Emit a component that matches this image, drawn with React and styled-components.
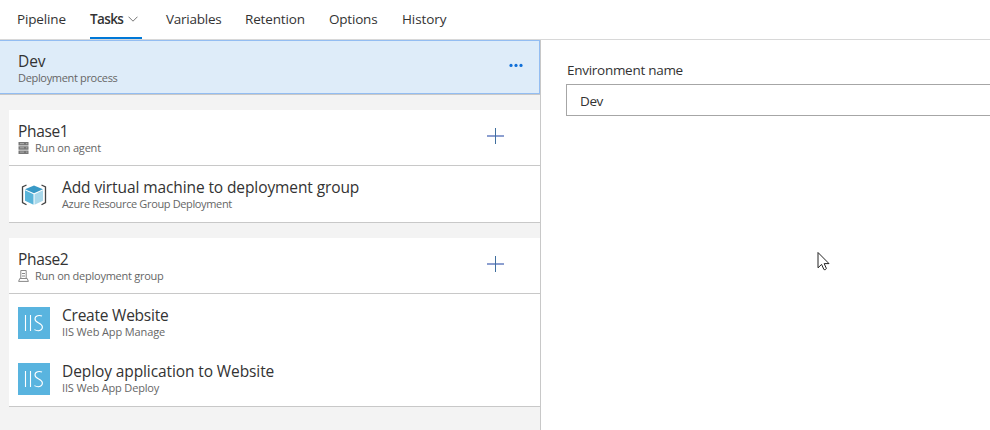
import React from "react";
import styled, { createGlobalStyle } from "styled-components";

const GlobalStyle = createGlobalStyle`
  * { box-sizing: border-box; }
  body { margin: 0; background: #fff; overflow: hidden; font-family: "Open Sans", "Noto Sans", sans-serif; color: #333; }
`;
const Page = styled.div`
  width: 990px; height: 430px; display: flex; flex-direction: column; overflow: hidden;
`;
const TabBar = styled.nav`
  height: 40px; flex: none; display: flex; gap: 24px; padding-left: 17px; border-bottom: 1px solid #d8d8d8;
`;
const Tab = styled.div`
  display: flex; align-items: center; gap: 5px; height: 39px; width: ${(p) => p.$width}px;
  font-size: 13.5px; line-height: 20px; white-space: nowrap; letter-spacing: ${(p) => p.$spacing || 0}px;
  font-weight: ${(p) => (p.$active ? 600 : 400)};
  border-bottom: 2px solid ${(p) => (p.$active ? "#0078d7" : "transparent")};
  svg { flex: none; }
`;
const Body = styled.main`
  flex: 1; min-height: 0; display: flex;
`;
const Sidebar = styled.section`
  width: 541px; flex: none; background: #f3f3f3; border-right: 1px solid #c8c8c8;
`;
const ProcessRow = styled.header`
  height: 54px; display: flex; align-items: center; justify-content: space-between;
  padding: 0 16px 0 18px; background: #deecf9; border: solid #93bdf2; border-width: 1px 1px 1px 0;
  box-shadow: 0 1px 0 #c8c8c8;
  > svg { margin-bottom: 4px; }
`;
const Group = styled.section`
  margin: ${(p) => p.$top}px 0 0 9px; background: #fff; border-bottom: 1px solid #c8c8c8;
`;
const PhaseRow = styled.header`
  height: 56px; display: flex; align-items: center; justify-content: space-between;
  padding: 0 36px 0 9px; border-bottom: 1px solid #c8c8c8;
  > svg { margin-bottom: 3px; }
`;
const TaskRow = styled.div`
  height: 56px; display: flex; align-items: center; gap: 12px; padding: 2px 0 0 9px;
`;
const Labels = styled.div`
  display: flex; flex-direction: column; padding-bottom: ${(p) => p.$lift || 0}px;
`;
const Title = styled.div`
  height: 21px; padding-top: 1px; font-size: 15.5px; line-height: 20px; white-space: nowrap;
  letter-spacing: ${(p) => p.$spacing ?? -0.1}px;
`;
const Subtitle = styled.div`
  display: flex; align-items: center; gap: 6px; height: 14px; padding-bottom: 1px; color: #666;
  font-size: 11px; line-height: 13px; white-space: nowrap; letter-spacing: ${(p) => p.$spacing ?? -0.33}px;
`;
const IisTile = styled.div`
  width: 32px; height: 32px; background: #59b4df; color: #fff; display: flex; align-items: center; justify-content: center;
`;
const Details = styled.section`
  flex: 1; padding: 20px 0 0 25px; position: relative;
`;
const FieldLabel = styled.label`
  display: block; height: 20px; padding-left: 1px; font-size: 13.5px; line-height: 20px; letter-spacing: -0.28px;
`;
const Field = styled.div`
  height: 32px; margin-top: 4px; padding: 1px 0 0 13px; border: 1px solid #a6a6a6; border-right: 0;
  font-size: 13.5px; line-height: 30px; letter-spacing: -0.4px;
`;
const Pointer = styled.svg`
  position: absolute; left: 276px; top: 211px;
`;

const Chevron = () => (
  <svg width="10" height="6" viewBox="0 0 10 6" fill="none" stroke="#777"><path d="M.5 .7 5 5.2 9.5 .7" /></svg>
);
const Dots = () => (
  <svg width="14" height="4" viewBox="0 0 14 4" fill="#106fd8"><circle cx="2" cy="2.4" r="1.6" /><circle cx="7" cy="2.4" r="1.6" /><circle cx="12" cy="2.4" r="1.6" /></svg>
);
const Plus = () => (
  <svg width="17" height="16" viewBox="0 0 17 16" fill="none"><path d="M0 8H17" stroke="#8c9fd0" strokeWidth="2" /><path d="M8.5 0V16" stroke="#3f6f9f" /></svg>
);
const ServerIcon = () => (
  <svg width="11" height="12" viewBox="0 0 11 12">
    <path d="M.5 0h10v3.5H.5zM.5 4.2h10v3.5H.5zM.5 8.4h10v3.5H.5z" fill="#777" />
    <path d="M2 1.6h4M8 1.6h1.4M2 5.8h4M8 5.8h1.4M2 10.1h4M8 10.1h1.4" stroke="#bbb" strokeWidth=".8" />
  </svg>
);
const MachineIcon = () => (
  <svg width="11" height="12" viewBox="0 0 11 12" fill="none" stroke="#888">
    <path d="M2.8 8.5v-8h5.4v8M4 3.5h3M4 6h3M1.8 8.5h7.4l1.2 2.9H.6z" />
  </svg>
);
const CubeIcon = () => (
  <svg width="32" height="32" viewBox="0 0 32 32">
    <path d="M8.5 6 4.5 8v15.5l4 2.3M23.5 6l4 2v15.5l-4 2.3" fill="none" stroke="#444" strokeWidth="1.3" />
    <path d="M16 6.5l9 3.7-9 4-9-4z" fill="#3999c6" />
    <path d="M7 11.3l8.5 4v10.4L7 21.8z" fill="#59b4d9" />
    <path d="M25 11.3l-8.5 4v10.4l8.5-4z" fill="#a8d8eb" />
  </svg>
);
const IisIcon = () => (
  <IisTile>
    <svg width="32" height="32" viewBox="0 0 32 32" fill="none" stroke="#fff" strokeWidth="1.1">
      <path d="M7.5 8v16M12.5 8v16M24 9.1c-2.3-1.1-7-.9-7 2.9 0 4.4 7.4 3.7 7.4 8.1 0 4-5 4.3-8 2.5" />
    </svg>
  </IisTile>
);

const TABS = [
  { name: "Pipeline", width: 49, spacing: -0.15 },
  { name: "Tasks", width: 52, active: true, spacing: -0.6 },
  { name: "Variables", width: 55, spacing: -0.25 },
  { name: "Retention", width: 60, spacing: -0.15 },
  { name: "Options", width: 49, spacing: -0.2 },
  { name: "History", width: 45, spacing: -0.1 },
];
const PHASES = [
  {
    name: "Phase1", runOn: "Run on agent", Icon: ServerIcon, top: 16, spacing: -0.2,
    tasks: [{ name: "Add virtual machine to deployment group", type: "Azure Resource Group Deployment", Icon: CubeIcon, typeSpacing: -0.36 }],
  },
  {
    name: "Phase2", runOn: "Run on deployment group", Icon: MachineIcon, top: 15, spacing: -0.25,
    tasks: [
      { name: "Create Website", type: "IIS Web App Manage", Icon: IisIcon, spacing: -0.23, typeSpacing: -0.12 },
      { name: "Deploy application to Website", type: "IIS Web App Deploy", Icon: IisIcon, typeSpacing: -0.16 },
    ],
  },
];

export default function App() {
  return (
    <Page>
      <GlobalStyle />
      <TabBar>
        {TABS.map((t) => (
          <Tab key={t.name} $width={t.width} $active={t.active} $spacing={t.spacing}>
            {t.name}{t.active && <Chevron />}
          </Tab>
        ))}
      </TabBar>
      <Body>
        <Sidebar>
          <ProcessRow>
            <Labels><Title>Dev</Title><Subtitle>Deployment process</Subtitle></Labels>
            <Dots />
          </ProcessRow>
          {PHASES.map((p) => (
            <Group key={p.name} $top={p.top}>
              <PhaseRow>
                <Labels><Title $spacing={-0.35}>{p.name}</Title><Subtitle $spacing={p.spacing}><p.Icon />{p.runOn}</Subtitle></Labels>
                <Plus />
              </PhaseRow>
              {p.tasks.map((t) => (
                <TaskRow key={t.name}>
                  <t.Icon />
                  <Labels $lift={3}><Title $spacing={t.spacing}>{t.name}</Title><Subtitle $spacing={t.typeSpacing}>{t.type}</Subtitle></Labels>
                </TaskRow>
              ))}
            </Group>
          ))}
        </Sidebar>
        <Details>
          <FieldLabel>Environment name</FieldLabel>
          <Field>Dev</Field>
          <Pointer width="13" height="20" viewBox="0 0 13 20"><path d="M1 1.5v15.3l3.6-3.4 2.3 5.1c1.3.5 2.3 0 2.4-1.2L7.2 12.6H12z" fill="#fff" stroke="#222" /></Pointer>
        </Details>
      </Body>
    </Page>
  );
}
